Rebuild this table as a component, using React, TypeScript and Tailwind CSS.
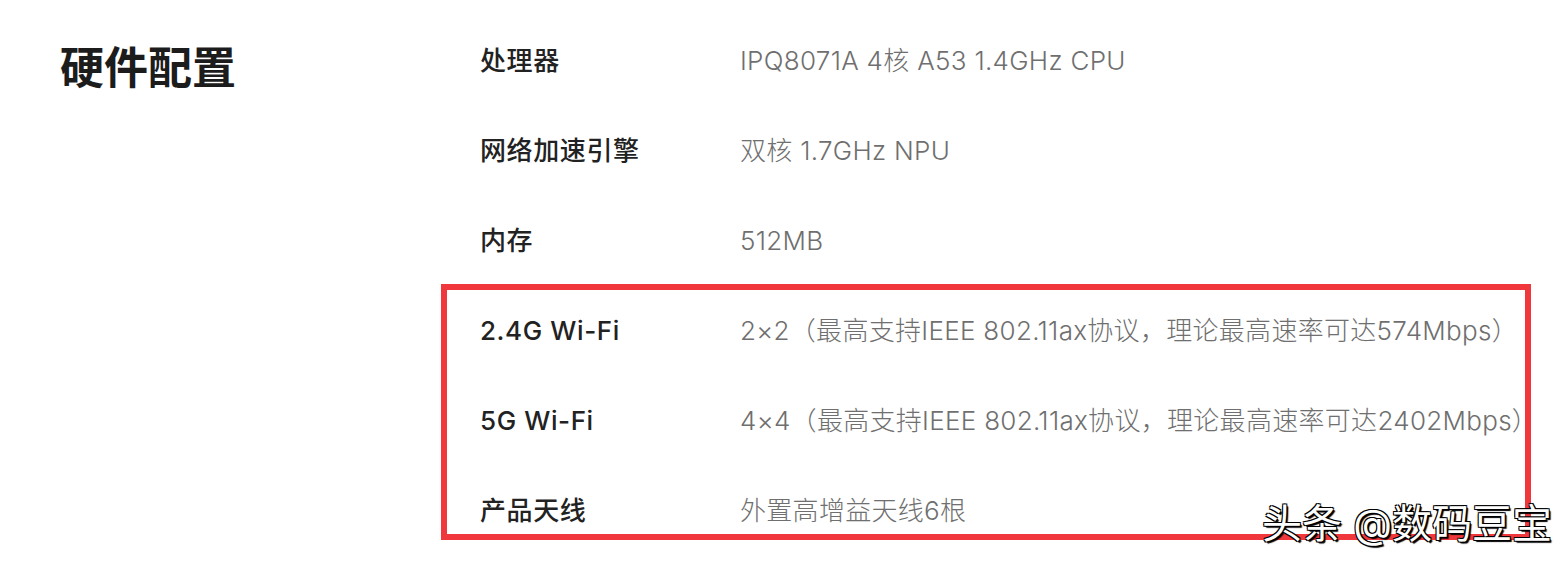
import React from 'react';

const specs: { label: string; value: string }[] = [
  { label: '处理器', value: 'IPQ8071A 4核 A53 1.4GHz CPU' },
  { label: '网络加速引擎', value: '双核 1.7GHz NPU' },
  { label: '内存', value: '512MB' },
  { label: '2.4G Wi-Fi', value: '2×2（最高支持IEEE 802.11ax协议，理论最高速率可达574Mbps）' },
  { label: '5G Wi-Fi', value: '4×4（最高支持IEEE 802.11ax协议，理论最高速率可达2402Mbps）' },
  { label: '产品天线', value: '外置高增益天线6根' },
];

export default function App() {
  return (
    <div
      className="relative w-[1565px] h-[563px] overflow-hidden bg-white"
      style={{ fontFamily: 'Inter, "Noto Sans CJK SC", sans-serif' }}
    >
      <div className="flex">
        {/* Section title */}
        <div className="w-[480px] pl-[60px] pt-[40px]">
          <h2 className="text-[44px] leading-[56px] font-bold text-[#1c1c1c]">硬件配置</h2>
        </div>

        {/* Spec rows */}
        <div className="flex flex-col pt-[15px]">
          {specs.map((s) => (
            <div key={s.label} className="flex items-center h-[90px]">
              <div className="w-[260px] text-[26px] font-medium text-[#222] tracking-[0.6px]">{s.label}</div>
              <div className="text-[26px] font-light text-[#6f6f6f] whitespace-nowrap tracking-[0.3px]">{s.value}</div>
            </div>
          ))}
        </div>
      </div>

      {/* Red annotation box */}
      <div className="absolute left-[441px] top-[284px] w-[1090px] h-[256px] border-[6px] border-[#f0383c]" />

      {/* Watermark */}
      <div className="absolute left-[1262px] top-[500px] text-[40px] leading-[48px] text-white whitespace-nowrap [text-shadow:1px_1px_0_#000,-1px_-1px_0_#000,1px_-1px_0_#000,-1px_1px_0_#000,2px_2px_1px_#000]">
        头条 @数码豆宝
      </div>
    </div>
  );
}
